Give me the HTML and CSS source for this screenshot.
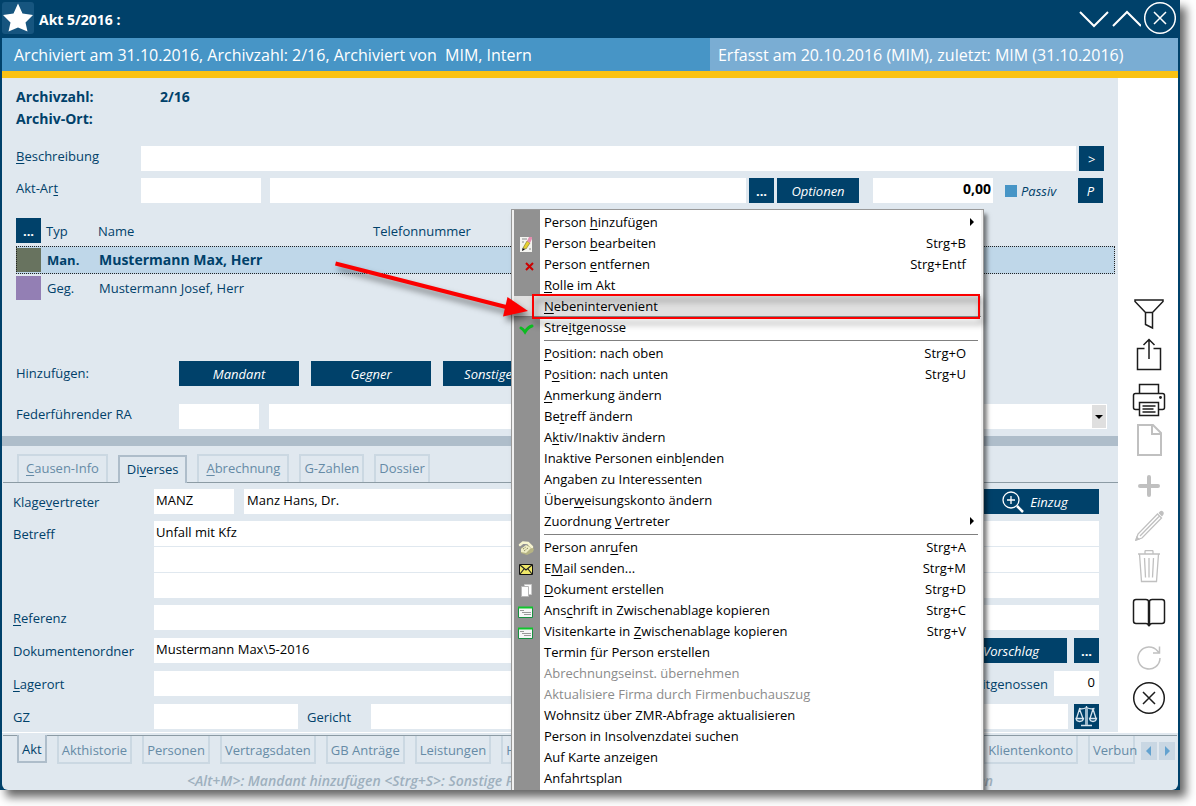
FILE: index.html
```html
<!DOCTYPE html>
<html lang="de">
<head>
<meta charset="utf-8">
<title>Akt 5/2016</title>
<link rel="stylesheet" href="styles.css">
</head>
<body>
<main class="window">
  <header class="titlebar">
    <svg class="star" viewBox="0 0 32 32" aria-hidden="true"><path d="M16 1.500 20.500 11.500 31 13 23.500 20.500 25.500 29.500 16 25.500 6.500 29.500 8.500 20.500 1 13 11.500 11.500z"/></svg>
    <h1 class="title">Akt 5/2016 :</h1>
    <div class="title-actions">
      <button type="button" class="title-btn" aria-label="Nach unten"><svg viewBox="0 0 32 36"><path d="M3 12 17 26 31 12"/></svg></button>
      <button type="button" class="title-btn" aria-label="Nach oben"><svg viewBox="0 0 32 36"><path d="M4 26 18 12 32 26"/></svg></button>
      <button type="button" class="title-btn" aria-label="Fenster schließen"><svg viewBox="0 0 32 36"><circle cx="16" cy="18" r="15.300"/><path d="m10 12 12 12M22 12 10 24"/></svg></button>
    </div>
  </header>
  <div class="infobar">
    <span class="info-left">Archiviert am 31.10.2016, Archivzahl: 2/16, Archiviert von&nbsp; MIM, Intern</span>
    <span class="info-right">Erfasst am 20.10.2016 (MIM), zuletzt: MIM (31.10.2016)</span>
  </div>
  <div class="body">
    <div class="content">
      <section class="upper">
        <dl class="archive">
          <dt>Archivzahl:</dt><dd>2/16</dd>
          <dt>Archiv-Ort:</dt><dd></dd>
        </dl>
        <div class="row head-row">
          <label for="beschreibung"><u>B</u>eschreibung</label>
          <input id="beschreibung" class="field grow" type="text">
          <button type="button" class="btn square gap-s">&gt;</button>
        </div>
        <div class="row head-row">
          <label for="aktart">Akt-Ar<u>t</u></label>
          <input id="aktart" class="field w120" type="text">
          <input class="field grow gap-m" type="text" aria-label="Akt-Art Text">
          <button type="button" class="btn square gap-s bold">...</button>
          <button type="button" class="btn w82 gap-s">Optionen</button>
          <input class="field w120 amount gap-l" type="text" value="0,00" aria-label="Betrag">
          <label class="check"><input type="checkbox">Passiv</label>
          <button type="button" class="btn square">P</button>
        </div>
        <table class="persons">
          <thead>
            <tr><th class="c-mark"><button type="button" class="btn square bold">...</button></th><th class="c-typ">Typ</th><th class="c-name">Name</th><th>Telefonnummer</th></tr>
          </thead>
          <tbody>
            <tr class="selected"><td><span class="swatch olive"></span></td><td>Man.</td><td class="name">Mustermann Max, Herr</td><td></td></tr>
            <tr><td><span class="swatch violet"></span></td><td>Geg.</td><td>Mustermann Josef, Herr</td><td></td></tr>
          </tbody>
        </table>
        <div class="row add-row">
          <span class="caption">Hinzufügen:</span>
          <button type="button" class="btn w120">Mandant</button>
          <button type="button" class="btn w120">Gegner</button>
          <button type="button" class="btn w90">Sonstige</button>
        </div>
        <div class="row lead-row">
          <label for="ra">Federführender RA</label>
          <input id="ra" class="field w80" type="text">
          <div class="combo"><select aria-label="Name RA"><option></option></select><svg viewBox="0 0 14 23" aria-hidden="true"><path d="M3 10h8l-4 4z"/></svg></div>
        </div>
      </section>
      <nav class="tabs" aria-label="Detailbereiche">
        <button type="button" class="tab wide"><u>C</u>ausen-Info</button>
        <button type="button" class="tab wide active">Di<u>v</u>erses</button>
        <button type="button" class="tab wide"><u>A</u>brechnung</button>
        <button type="button" class="tab">G-Zahlen</button>
        <button type="button" class="tab">Dossier</button>
      </nav>
      <section class="details">
        <div class="row">
          <label for="kv">Klage<u>v</u>ertreter</label>
          <input id="kv" class="field w80" type="text" value="MANZ">
          <input class="field grow gap-n" type="text" value="Manz Hans, Dr." aria-label="Name Klagevertreter">
          <button type="button" class="btn w160 lens"><svg viewBox="0 0 22 22"><circle cx="9" cy="9" r="8"/><path d="M9 5v8M5 9h8"/><path class="thick" d="m15 15 6 6"/></svg>Einzug</button>
        </div>
        <div class="row subject">
          <label for="betreff">Betreff</label>
          <div class="lines grow">
            <input id="betreff" class="field" type="text" value="Unfall mit Kfz">
            <input class="field" type="text" aria-label="Betreff Zeile 2">
            <input class="field" type="text" aria-label="Betreff Zeile 3">
          </div>
        </div>
        <div class="row">
          <label for="referenz"><u>R</u>eferenz</label>
          <input id="referenz" class="field grow" type="text">
        </div>
        <div class="row">
          <label for="ordner">Dokumentenordner</label>
          <input id="ordner" class="field grow" type="text" value="Mustermann Max\5-2016">
          <button type="button" class="btn w112 gap-s">Vorschlag</button>
          <button type="button" class="btn square gap-t bold">...</button>
        </div>
        <div class="row">
          <label for="lagerort"><u>L</u>agerort</label>
          <input id="lagerort" class="field grow" type="text">
          <label class="inline" for="streit">Streitgenossen</label>
          <input id="streit" class="field w45" type="text" value="0">
        </div>
        <div class="row">
          <label for="gz">GZ</label>
          <input id="gz" class="field w144" type="text">
          <label class="court" for="gericht">Gericht</label>
          <input id="gericht" class="field grow" type="text">
          <button type="button" class="btn square scales" aria-label="Gericht suchen"><svg viewBox="0 0 25 25"><path d="M12.500 2v19M5 4.500q4 1 7.500-1 3.500 2 8 1M5.500 5 2.500 14.500M5.500 5l3.500 9.500M19 5l-3 9.500M19 5l3 9.500M2 14.500h7.500q-.5 3-3.800 3T2 14.500zM15.500 14.500H22.500q-.5 3-3.500 3t-3.500-3zM7 21.500h11"/><path class="pillar" d="M12.500 4v17"/></svg></button>
        </div>
      </section>
    </div>
    <aside class="rail">
      <button type="button" aria-label="Filter"><svg viewBox="0 0 36 43"><path d="M4 8h28v1.500l-10.500 11V36l-7-3.500V20.500L4 9.500zM14.500 20.500h7"/></svg></button>
      <button type="button" aria-label="Export"><svg viewBox="0 0 36 43"><path d="M13.500 13.500h-7v21h23v-21h-7M18 24V4.500M12.500 10 18 4.500l5.500 5.500"/></svg></button>
      <button type="button" aria-label="Drucken"><svg viewBox="0 0 36 43"><path d="M8.500 15.500v-9h19v9M8.500 31.500h-4q-2 0-2-2v-12q0-2 2-2h27q2 0 2 2v12q0 2-2 2h-4M8.500 24.500h19v13h-19zM11.500 28h13M11.500 31h11M11.500 34h13"/><circle cx="29.500" cy="19.500" r=".7"/></svg></button>
      <button type="button" disabled aria-label="Neu"><svg class="bold-stroke" viewBox="0 0 36 43"><path d="M7 4h15l8 8v22H7zM21 4v9h9"/></svg></button>
      <button type="button" disabled aria-label="Hinzufügen"><svg class="heavy-stroke" viewBox="0 0 36 43"><path d="M18 13v18M9 22h18"/></svg></button>
      <button type="button" disabled aria-label="Bearbeiten"><svg class="thin-stroke" viewBox="0 0 36 43"><path d="m5 33 2-6L26.500 7l4 4L11 31zM9 29 28.500 9"/><path class="solid" d="m4 34 1.500-5 3.500 3.500zM27.500 6q2.500-3.500 4.500-1.500t-1 5z"/></svg></button>
      <button type="button" disabled aria-label="Löschen"><svg class="thin-stroke" viewBox="0 0 36 43"><path d="M7 4h22M8.500 4l2 27.500h15l2-27.500M14 4V1.500q0-1 1-1h6q1 0 1 1V4M13.500 8l1 19.500M18 8v19.500M22.500 8l-1 19.500"/></svg></button>
      <button type="button" aria-label="Buch"><svg viewBox="0 0 36 43"><path d="M18 8.500q-1-2-3-2H5q-2.500 0-2.500 2.500v19q0 2.500 2.500 2.500h10q2 0 3 2 1-2 3-2h10q2.500 0 2.500-2.500V9q0-2.500-2.500-2.500H21q-2 0-3 2z"/><path class="spine" d="M18 8v25"/></svg></button>
      <button type="button" disabled aria-label="Aktualisieren"><svg viewBox="0 0 36 43"><path d="M29 22a11 11 0 1 1-2.500-7l2 2M28.500 10.500v6.500H22"/></svg></button>
      <button type="button" aria-label="Schließen"><svg viewBox="0 0 36 43"><circle cx="18" cy="19" r="15.300"/><path d="m12 13 12 12M24 13 12 25"/></svg></button>
    </aside>
  </div>
  <footer class="footer">
    <nav class="bottom-tabs" aria-label="Aktbereiche">
      <button type="button" class="tab active">Akt</button>
      <button type="button" class="tab">Akthistorie</button>
      <button type="button" class="tab">Personen</button>
      <button type="button" class="tab">Vertragsdaten</button>
      <button type="button" class="tab">GB Anträge</button>
      <button type="button" class="tab">Leistungen</button>
      <button type="button" class="tab">H</button>
      <button type="button" class="tab far">Klientenkonto</button>
      <button type="button" class="tab cut">Verbun</button>
      <div class="pager">
        <button type="button" aria-label="Zurück"><svg viewBox="0 0 16 18"><path d="M10 4v10L5 9z"/></svg></button>
        <button type="button" aria-label="Weiter"><svg viewBox="0 0 16 18"><path d="M6 4v10l5-5z"/></svg></button>
      </div>
    </nav>
    <p class="hint"><span>&lt;Alt+M&gt;: Mandant hinzufügen &lt;Strg+S&gt;: Sonstige Personen</span><span>hinzufügen</span></p>
  </footer>

  <div class="overlay">
    <div class="menu" role="menu">
      <button type="button" role="menuitem"><span>Person <u>h</u>inzufügen</span><svg class="sub" viewBox="0 0 6 8"><path d="M1 0v8l4-4z"/></svg></button>
      <button type="button" role="menuitem"><svg class="ico" viewBox="0 0 16 16"><path fill="#f4f4f0" d="M2 1h12v15H2z"/><path stroke="#8a8a8a" d="M4 3h5M4 6h2M11 13h2"/><path fill="#e8d030" stroke="#77702a" stroke-width=".6" d="M5 12 9 5l3 2-4 6z"/><path fill="#e58fb0" d="m9 5 2-4h3v2l-2 4z"/><path fill="#111" d="m4 15 .5-3L7 13.500z"/></svg><span>Person <u>b</u>earbeiten</span><kbd>Strg+B</kbd></button>
      <button type="button" role="menuitem"><svg class="ico" viewBox="0 0 16 16"><path stroke="#cc0000" stroke-width="2" d="m8 6 7 7M15 6l-7 7"/></svg><span>Person <u>e</u>ntfernen</span><kbd>Strg+Entf</kbd></button>
      <button type="button" role="menuitem"><span><u>R</u>olle im Akt</span></button>
      <button type="button" role="menuitem" class="current"><span><u>N</u>ebenintervenient</span></button>
      <button type="button" role="menuitem"><svg class="ico" viewBox="0 0 16 16"><path fill="none" stroke="#0cbb20" stroke-width="3" stroke-linecap="round" d="M3 8q2 1 4 4 3-5 7-6"/></svg><span>Stre<u>i</u>tgenosse</span></button>
      <hr>
      <button type="button" role="menuitem"><span><u>P</u>osition: nach oben</span><kbd>Strg+O</kbd></button>
      <button type="button" role="menuitem"><span>P<u>o</u>sition: nach unten</span><kbd>Strg+U</kbd></button>
      <button type="button" role="menuitem"><span><u>A</u>nmerkung ändern</span></button>
      <button type="button" role="menuitem"><span>Be<u>t</u>reff ändern</span></button>
      <button type="button" role="menuitem"><span>A<u>k</u>tiv/Inaktiv ändern</span></button>
      <button type="button" role="menuitem"><span>Inaktive Personen einb<u>l</u>enden</span></button>
      <button type="button" role="menuitem"><span>An<u>g</u>aben zu Interessenten</span></button>
      <button type="button" role="menuitem"><span>Über<u>w</u>eisungskonto ändern</span></button>
      <button type="button" role="menuitem"><span>Zuordnung <u>V</u>ertreter</span><svg class="sub" viewBox="0 0 6 8"><path d="M1 0v8l4-4z"/></svg></button>
      <hr>
      <button type="button" role="menuitem"><svg class="ico" viewBox="0 0 16 16"><path fill="#b5b383" d="m3 8 8-3 5 4-1 3-6 3-6-2z"/><path fill="#efedc5" d="m3 9 5-4 5 3-5 5-5-1z"/><path fill="none" stroke="#f6f4cf" stroke-width="2.500" stroke-linecap="round" d="m2 5 3-2.500 5 .5 4 4"/><path stroke="#77764d" stroke-dasharray="1 1" d="m5 9 3-2M6 11l4-3"/></svg><span>Person anr<u>u</u>fen</span><kbd>Strg+A</kbd></button>
      <button type="button" role="menuitem"><svg class="ico" viewBox="0 0 16 16"><path fill="#f0e868" stroke="#111" d="M1.500 3.500h13v10h-13z"/><path fill="none" stroke="#222" stroke-width="1.200" d="m2 4 6 5 6-5M2 13l4-5M14 13l-4-5"/></svg><span>E<u>M</u>ail senden...</span><kbd>Strg+M</kbd></button>
      <button type="button" role="menuitem"><svg class="ico" viewBox="0 0 16 16"><path fill="#fff" stroke="#c8c8c8" d="M6.500 2.500h7v10h-7z"/><path fill="#fff" stroke="#b8b8b8" d="M3.500 4.500h7v10h-7z"/></svg><span><u>D</u>okument erstellen</span><kbd>Strg+D</kbd></button>
      <button type="button" role="menuitem"><svg class="ico" viewBox="0 0 16 16"><path fill="#f6f6f6" stroke="#178f40" d="M.5 4.500h14v10H.500z"/><path stroke="#10c52c" stroke-width="2" d="M0 4.500h15"/><path stroke="#999" d="M2 7.500h4M4 9.500h9M6 11.500h7"/></svg><span>Ans<u>c</u>hrift in Zwischenablage kopieren</span><kbd>Strg+C</kbd></button>
      <button type="button" role="menuitem"><svg class="ico" viewBox="0 0 16 16"><path fill="#f6f6f6" stroke="#178f40" d="M.5 4.500h14v10H.500z"/><path stroke="#10c52c" stroke-width="2" d="M0 4.500h15"/><path stroke="#999" d="M2 7.500h4M4 9.500h9M6 11.500h7"/></svg><span>Visitenkarte in <u>Z</u>wischenablage kopieren</span><kbd>Strg+V</kbd></button>
      <button type="button" role="menuitem"><span>Termin <u>f</u>ür Person erstellen</span></button>
      <button type="button" role="menuitem" disabled><span>Abrechnungseinst. übernehmen</span></button>
      <button type="button" role="menuitem" disabled><span>Aktualisiere Firma durch Firmenbuchauszug</span></button>
      <button type="button" role="menuitem"><span>Wohnsitz über ZMR-Abfrage aktualisieren</span></button>
      <button type="button" role="menuitem"><span>Person in Insolvenzdatei suchen</span></button>
      <button type="button" role="menuitem"><span>Auf Karte anzeigen</span></button>
      <button type="button" role="menuitem"><span>Anfahrtsplan</span></button>
    </div>
    <svg class="arrow" viewBox="0 0 200 70" aria-hidden="true"><path d="M3.500 7.500 176 51.500" stroke="#fb0000" stroke-width="4"/><path fill="#fb0000" d="m175.500 41 20.500 14-25 5.500z"/></svg>
  </div>
</main>
</body>
</html>
```

FILE: styles.css
```css
* { box-sizing: border-box; }

body {
  margin: 0;
  background: #fff;
  color: #00416a;
  font: 13px/20px "Open Sans", "Noto Sans", sans-serif;
}

button, input, select {
  font: inherit;
  color: inherit;
  margin: 0;
  padding: 0;
  border: 0;
  border-radius: 0;
}

button { background: none; }
svg { display: block; fill: none; }
u { text-underline-offset: 2px; text-decoration-thickness: 1px; }

.window {
  position: relative;
  margin: 0 16px 16px 0;
  border: solid #00416a;
  border-width: 0 2px;
  background: #00416a;
  box-shadow: 6px 7px 9px rgba(0, 0, 0, .6);
}

/* Title and info bars */
.titlebar {
  display: flex;
  align-items: center;
  height: 38px;
  padding-bottom: 2px;
  color: #fff;
}

.star {
  width: 32px;
  height: 32px;
  border-radius: 3px;
  background: #16557f;
  fill: #fff;
}

.title {
  flex: 1;
  margin: 4px 0 0 5px;
  font-size: 14px;
  font-weight: 700;
}

.title-actions { display: flex; padding-right: 2px; }
.title-btn svg { width: 32px; height: 36px; stroke: #fff; stroke-width: 1.500; }
.title-btn:nth-child(-n+2) svg { stroke-width: 2; }
.title-btn:last-child { margin-left: 3px; }

.infobar {
  display: flex;
  height: 40px;
  border-bottom: 7px solid #fac213;
  color: #fff;
  font-size: 16px;
  line-height: 34px;
  white-space: nowrap;
}

.info-left { flex: 708; padding-left: 12px; background: #4795c6; }
.info-right { flex: 468; padding-left: 8px; background: #7aadd3; }

.body { display: grid; grid-template-columns: minmax(0, 1fr) 60px; background: #e0e8ef; }

/* Upper part of the file card */
.upper { padding: 8px 3px 7px 14px; border-bottom: 10px solid #aebdca; }

.archive {
  display: grid;
  grid-template-columns: 144px 1fr;
  grid-auto-rows: 22px;
  margin: 0 0 16px;
  font-size: 14px;
  font-weight: 700;
  line-height: 22px;
}

.archive dd { margin: 0; }

.row { display: flex; align-items: center; min-height: 25px; }
.row > label, .caption { flex: none; width: 163px; }
.head-row { margin-bottom: 7px; padding-right: 11px; }
.head-row + .head-row { padding-right: 12px; }
.head-row > label:first-child { width: 125px; }
.head-row > label:first-child, .lead-row > label { align-self: flex-start; }

.field {
  width: 100%;
  min-width: 0;
  height: 25px;
  padding: 0 2px 4px;
  background: #fff;
  color: #000;
}

.grow { flex: 1; }
.w45 { width: 45px; padding-right: 4px; text-align: right; }
.w80 { width: 80px; }
.w82 { width: 82px; }
.w90 { width: 90px; }
.w112 { width: 112px; }
.w120 { width: 120px; }
.w144 { width: 144px; }
.w160 { width: 160px; }
.gap-s { margin-left: 3px; }
.gap-t { margin-left: 7px; }
.gap-m { margin-left: 9px; }
.gap-n { margin-left: 10px; padding-left: 3px; }
.gap-l { margin-left: 14px; }
.amount { text-align: right; font-size: 14px; font-weight: 700; }

.btn {
  flex: none;
  height: 25px;
  background: #00416a;
  color: #fff;
  font-style: italic;
}

.square { width: 25px; }
.bold { font-weight: 700; font-style: normal; line-height: 18px; }

.row > .check {
  display: flex;
  align-items: center;
  gap: 4px;
  width: 73px;
  margin-left: 12px;
  font-style: italic;
}

.check input { appearance: none; width: 12px; height: 12px; background: #4795c6; }

.persons {
  width: 100%;
  margin-top: 15px;
  border-collapse: collapse;
  table-layout: fixed;
}

.persons th { height: 28px; padding: 0 0 3px; text-align: left; font-weight: 400; }
.persons td { height: 28px; padding: 0; }
.persons th + th { padding-left: 5px; }
.persons td + td { padding-left: 6px; }
.persons .btn { display: block; }
.persons .name { font-size: 14px; }
.c-mark { width: 25px; }
.c-typ { width: 52px; }
.c-name { width: 275px; }
.selected { background: #bfd7e9; outline: 1px dotted #222; outline-offset: -1px; font-weight: 700; }
.swatch { display: block; width: 25px; height: 24px; }
.olive { background: #68735f; }
.violet { background: #937fb4; }

.add-row { gap: 12px; margin-top: 59px; }
.add-row .caption { width: 151px; padding-bottom: 2px; }
.lead-row { margin-top: 18px; padding-right: 8px; }

.combo {
  flex: 1;
  display: flex;
  height: 25px;
  margin-left: 10px;
  padding: 1px;
  background: #fff;
}

.combo select { flex: 1; appearance: none; background: #fff; }
.combo svg { width: 14px; height: 23px; background: #dfdfdf; fill: #000; }

/* Tabs */
.tabs {
  display: flex;
  align-items: flex-end;
  gap: 10px;
  height: 37px;
  margin-left: 1px;
  padding-left: 14px;
  border-bottom: 1px solid #8c9ba4;
}

.tab {
  flex: none;
  height: 28px;
  padding: 0 3px;
  border: 2px solid #cbd8e2;
  background: #e0e8ef;
  color: #668ba6;
  white-space: nowrap;
}

.tabs .tab { padding-bottom: 2px; border-bottom: 0; }
.tabs .wide { padding: 0 7px 2px; }
.tab.active { border-color: #aebdca; color: #00416a; }
.tabs .active { margin-bottom: -1px; }

/* Detail form */
.details {
  display: flex;
  flex-direction: column;
  gap: 8px;
  padding: 6px 19px 3px 11px;
}

.details .row > label:first-child { width: 141px; }
.details .subject { align-items: flex-start; margin: -1px 0; }
.details .subject > label:first-child { padding-top: 3px; }
.lines { display: flex; flex-direction: column; gap: 1px; }

.lens { display: flex; align-items: center; justify-content: center; gap: 6px; padding-left: 32px; }
.lens svg { width: 22px; height: 22px; stroke: #fff; stroke-width: 1.300; }
.lens .thick { stroke-width: 2.500; }
.row > .inline { width: auto; margin: 0 6px 0 3px; }
.row > .court { width: 73px; padding-left: 9px; }
.scales { margin-left: 6px; }
.scales svg { width: 25px; height: 25px; stroke: #d7e4ee; stroke-width: 1.300; }
.scales .pillar { stroke-width: 3; stroke: #9cb9cd; }

/* Tool rail */
.rail {
  display: flex;
  flex-direction: column;
  align-items: center;
  padding: 214px 0 0 2px;
  background: #fff;
}

.rail svg { width: 36px; height: 43px; stroke: #1c1c1c; stroke-width: 1.500; }
.rail button:disabled svg { stroke: #c0c0c0; }
.rail .thin-stroke { stroke-width: 1.300; }
.rail .bold-stroke { stroke-width: 2; }
.rail .heavy-stroke { stroke-width: 4; stroke-linecap: round; }
.rail .solid { fill: #c0c0c0; stroke: none; }
.rail .spine { stroke-width: 2.500; }

/* Footer */
.footer {
  height: 58px;
  padding: 3px 1px 0;
  overflow: hidden;
  border-top: 1px solid #fff;
  border-radius: 0 0 6px 6px;
  background: #e0e8ef;
}

.bottom-tabs {
  display: flex;
  gap: 10px;
  height: 30px;
  margin-top: -1px;
  padding-left: 14px;
  border-top: 1px solid #8c9ba4;
}

.bottom-tabs .tab { padding-top: 2px; border-top: 0; }
.bottom-tabs .active { margin-top: -1px; }
.far { margin-left: auto; }
.bottom-tabs .cut { width: 47px; padding-right: 0; }
.pager { display: flex; gap: 2px; margin: 6px 2px 0 -4px; }
.pager button { width: 16px; height: 18px; background: #c9d7e3; }
.pager svg { fill: #63a2cf; }

.hint {
  display: flex;
  justify-content: space-between;
  margin: 6px 184px 0;
  color: #9eb0be;
  font-size: 14px;
  font-style: italic;
  font-weight: 600;
  white-space: nowrap;
}

/* Context menu lying over the form, cut off at the window's lower edge */
.overlay {
  position: absolute;
  inset: 0;
  overflow: hidden;
  pointer-events: none;
}

.menu {
  position: absolute;
  top: 209px;
  left: 509px;
  width: 473px;
  padding: 2px;
  border: 1px solid #999;
  background: linear-gradient(90deg, #f0f0f0 2px, #919191 2px 28px, #fff 28px 469px, #f0f0f0 469px);
  box-shadow: 3px 5px 4px rgba(0, 0, 0, .5);
  color: #000;
  pointer-events: auto;
}

.menu button {
  position: relative;
  display: flex;
  align-items: center;
  width: 100%;
  height: 21px;
  padding: 0 15px 2px 30px;
  text-align: left;
}

.menu button span { flex: 1; }
.menu button:disabled { color: #8b8b8b; }
.menu kbd { font: inherit; }
.menu hr { height: 1px; margin: 2px 3px 2px 30px; border: 0; background: #808080; }
.sub { width: 6px; height: 8px; margin-right: -9px; fill: #000; }
.ico { position: absolute; left: 4px; top: 3px; width: 16px; height: 16px; }

.menu .current { padding-bottom: 0; background: #e0e0e0; border-bottom: 1px solid #888; }

.menu .current::after {
  content: "";
  position: absolute;
  inset: -2px 1px -3px 18px;
  border: 2px solid #fb0000;
  filter: drop-shadow(3px 5px 3px rgba(0, 0, 0, .5));
}

.arrow {
  position: absolute;
  left: 330px;
  top: 256px;
  width: 200px;
  height: 70px;
  filter: drop-shadow(3px 5px 3px rgba(0, 0, 0, .5));
}
```
